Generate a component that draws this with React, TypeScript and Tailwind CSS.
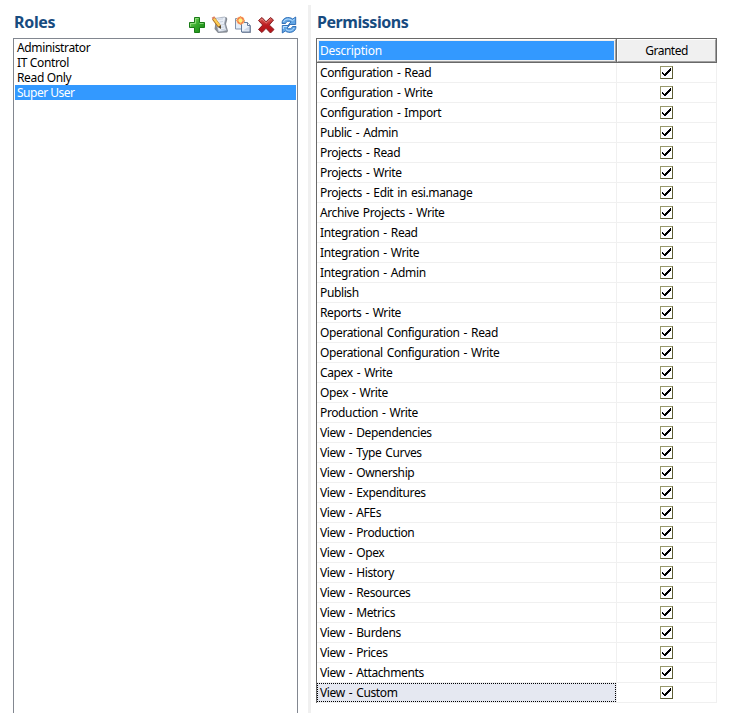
const roles = ["Administrator", "IT Control", "Read Only", "Super User"];

const permissions = [
  "Configuration - Read", "Configuration - Write", "Configuration - Import", "Public - Admin",
  "Projects - Read", "Projects - Write", "Projects - Edit in esi.manage", "Archive Projects - Write",
  "Integration - Read", "Integration - Write", "Integration - Admin", "Publish", "Reports - Write",
  "Operational Configuration - Read", "Operational Configuration - Write", "Capex - Write",
  "Opex - Write", "Production - Write", "View - Dependencies", "View - Type Curves",
  "View - Ownership", "View - Expenditures", "View - AFEs", "View - Production", "View - Opex",
  "View - History", "View - Resources", "View - Metrics", "View - Burdens", "View - Prices",
  "View - Attachments", "View - Custom",
];

function AddIcon() {
  return (
    <svg width="18" height="18" viewBox="0 0 18 18">
      <defs>
        <linearGradient id="add" x1="0" y1="0" x2="1" y2="1">
          <stop offset="0" stopColor="#8ce06a" />
          <stop offset="0.5" stopColor="#35a82b" />
          <stop offset="1" stopColor="#178512" />
        </linearGradient>
      </defs>
      <path d="M6.500 1.500h5v5h5v5h-5v5h-5v-5h-5v-5h5z" fill="url(#add)" stroke="#197b16" strokeLinejoin="round" />
      <path d="M7.500 7.500v-5h3M2.500 10.500v-3h5M11.500 7.500h4" fill="none" stroke="#a7e794" strokeOpacity=".7" />
    </svg>
  );
}

function EditIcon() {
  return (
    <svg width="18" height="18" viewBox="0 0 18 18">
      <path d="M5 3L14 1Q17 1 16 4.500L15 8L17 15L16 16.500L7 17L3.500 13z" fill="#858a92" />
      <path d="M3.500 2.500L13.500 1Q15 1 14.500 3L13.500 7.500L15.500 14.500L7.500 16Z" fill="#e9eef6" stroke="#99a4b3" strokeWidth=".7" />
      <path d="M7 3.500l5-.7M8.500 6l3.500-.5M9.500 9l3.500-.5M9.500 11.500l4-.6M10 13.800l4-.6" stroke="#c2ccd9" strokeWidth=".8" />
      <path d="M2.500 2.500L8.500 10.500" stroke="#a5681d" strokeWidth="3.600" />
      <path d="M2.800 2.500L8.500 10" stroke="#ffce55" strokeWidth="2.200" />
      <path d="M1.200 2.700L3.800 1" stroke="#dd8062" strokeWidth="2" />
      <path d="M7 11L10 9.300L10 13z" fill="#554832" />
    </svg>
  );
}

function CopyIcon() {
  return (
    <svg width="18" height="18" viewBox="0 0 18 18">
      <path d="M1.500 2.500h6l3 3v7.500h-9z" fill="#e4edf8" stroke="#8192ab" />
      <path d="M8 7h6l3 3v7H8z" fill="#9299a5" />
      <path d="M7.500 6.500h6l2.500 3v6.500h-8.500z" fill="#eef3fa" stroke="#62799b" />
      <path d="M9 14.500h6v-4z" fill="#ccd8e9" />
      <path d="M13.500 6.500v3h2.500" fill="#fff" stroke="#62799b" />
      <circle cx="6.500" cy="4.500" r="4" fill="#ffc078" />
      <circle cx="6.500" cy="4.500" r="2.800" fill="#fff07c" stroke="#ef704a" strokeWidth="1.200" />
      <path d="M6.500 0v2M6.500 7v2M2 4.500h2M9 4.500h2" stroke="#f9a064" />
    </svg>
  );
}

function DeleteIcon() {
  return (
    <svg width="18" height="18" viewBox="0 0 18 18">
      <defs>
        <linearGradient id="delete" x1="0" y1="0" x2="0" y2="1">
          <stop offset="0" stopColor="#d8645d" />
          <stop offset="0.5" stopColor="#bd1b20" />
          <stop offset="1" stopColor="#b31319" />
        </linearGradient>
      </defs>
      <path d="M1.500 4.500L5 1.500L9 5.800L13.500 1.500L16.500 4L12.300 9L17 13.500L13.500 17L9 12.300L5 16.500L1.500 13.500L5.700 9z" fill="url(#delete)" stroke="#851b20" strokeLinejoin="round" />
      <path d="M3 4.500l2-1.500L9 7.200L13.500 3" fill="none" stroke="#ef9a90" strokeOpacity=".6" />
    </svg>
  );
}

function RefreshIcon() {
  return (
    <svg width="18" height="18" viewBox="0 0 18 18">
      <g fill="#62a6e5" stroke="#2768b2" strokeWidth=".9" strokeLinejoin="round">
        <path d="M2 7.500C2 1.200 9 .2 12.700 3L15.700 1V8.500H8.500L11 5.900C8.800 4.500 6 5.300 5.500 7.500z" />
        <path d="M16 10.500C16 16.500 9 17.800 5.300 15L2.300 17V9.500H9.500L7 12.100C9.200 13.500 12 12.700 12.500 10.500z" />
      </g>
      <path d="M3.500 6C5 2.500 9 2.300 12.500 4.700L14.700 3M3.300 13V10.500H7M6 13.500C9 15.800 12.500 14.800 14.200 12" fill="none" stroke="#bde0ff" />
    </svg>
  );
}

function CheckBox() {
  return (
    <span className="flex h-[13px] w-[13px] border border-t-[#99996b] border-l-[#99996b] border-r-[#5c5c32] border-b-[#5c5c32] bg-white">
      <svg width="11" height="11" viewBox="0 0 11 11" shapeRendering="crispEdges">
        <path d="M1 5h1v1h1v1h1V6h1V5h1V4h1V3h1V2h1V1h1v3H9v1H8v1H7v1H6v1H5v1H3V8H2V7H1z" fill="#000" />
      </svg>
    </span>
  );
}

export default function App() {
  return (
    <div className="flex h-[713px] w-[732px] overflow-hidden bg-white font-['Noto_Sans','Open_Sans',sans-serif] text-[12px] text-black">
      <section className="ml-[13px] flex w-[285px] shrink-0 flex-col">
        <header className="flex h-[38px] shrink-0 items-start justify-between pt-[11px]">
          <h1 className="pl-px text-[16px] leading-[23px] font-bold tracking-[-0.3px] text-[#174b80]">Roles</h1>
          <div className="flex gap-[5px] pt-[5px]">
            <AddIcon /><EditIcon /><CopyIcon /><DeleteIcon /><RefreshIcon />
          </div>
        </header>
        <ul className="flex-1 border border-b-0 border-[#828790] px-px pt-px">
          {roles.map((role) => (
            <li key={role} className={role === "Super User" ? "h-[15px] bg-[#3399ff] pl-[2px] leading-[15px] tracking-[-0.5px] text-white" : "h-[15px] pl-[2px] leading-[15px] tracking-[-0.36px]"}>{role}</li>
          ))}
        </ul>
      </section>
      <div className="mt-[5px] ml-[10px] w-[3px] shrink-0 bg-[#f0f0f0]" />
      <section className="ml-[5px] w-[401px] shrink-0">
        <header className="h-[38px] pt-[11px] pl-px">
          <h1 className="text-[16px] leading-[23px] font-bold tracking-[-0.45px] text-[#174b80]">Permissions</h1>
        </header>
        <div className="flex h-[25px] border border-[#696969]">
          <div className="w-[299px] border border-t-white border-l-white border-r-[#a0a0a0] border-b-[#a0a0a0] bg-[#f0f0f0] p-px">
            <div className="h-[19px] bg-[#3399ff] pl-px leading-[20px] tracking-[-0.25px] text-white">Description</div>
          </div>
          <div className="w-px bg-[#696969]" />
          <div className="flex-1 border border-t-white border-l-white border-r-[#a0a0a0] border-b-[#a0a0a0] bg-[#f0f0f0] text-center leading-[22px] tracking-[-0.5px]">Granted</div>
        </div>
        <div className="border-l border-[#696969]">
          {permissions.map((permission) => {
            const selected = permission === "View - Custom";
            return (
              <div key={permission} className="flex h-[20px] border-b border-[#f0f0f0] tracking-[-0.38px] [word-spacing:1.25px]">
                <div className={selected ? "w-[299px] border border-dotted border-black bg-[#e5e8f1] pl-[2px] leading-[18px]" : "w-[299px] pl-[3px] leading-[20px]"}>{permission}</div>
                <div className="flex flex-1 justify-center border-x border-[#f0f0f0] pt-[3px]"><CheckBox /></div>
              </div>
            );
          })}
        </div>
      </section>
    </div>
  );
}
